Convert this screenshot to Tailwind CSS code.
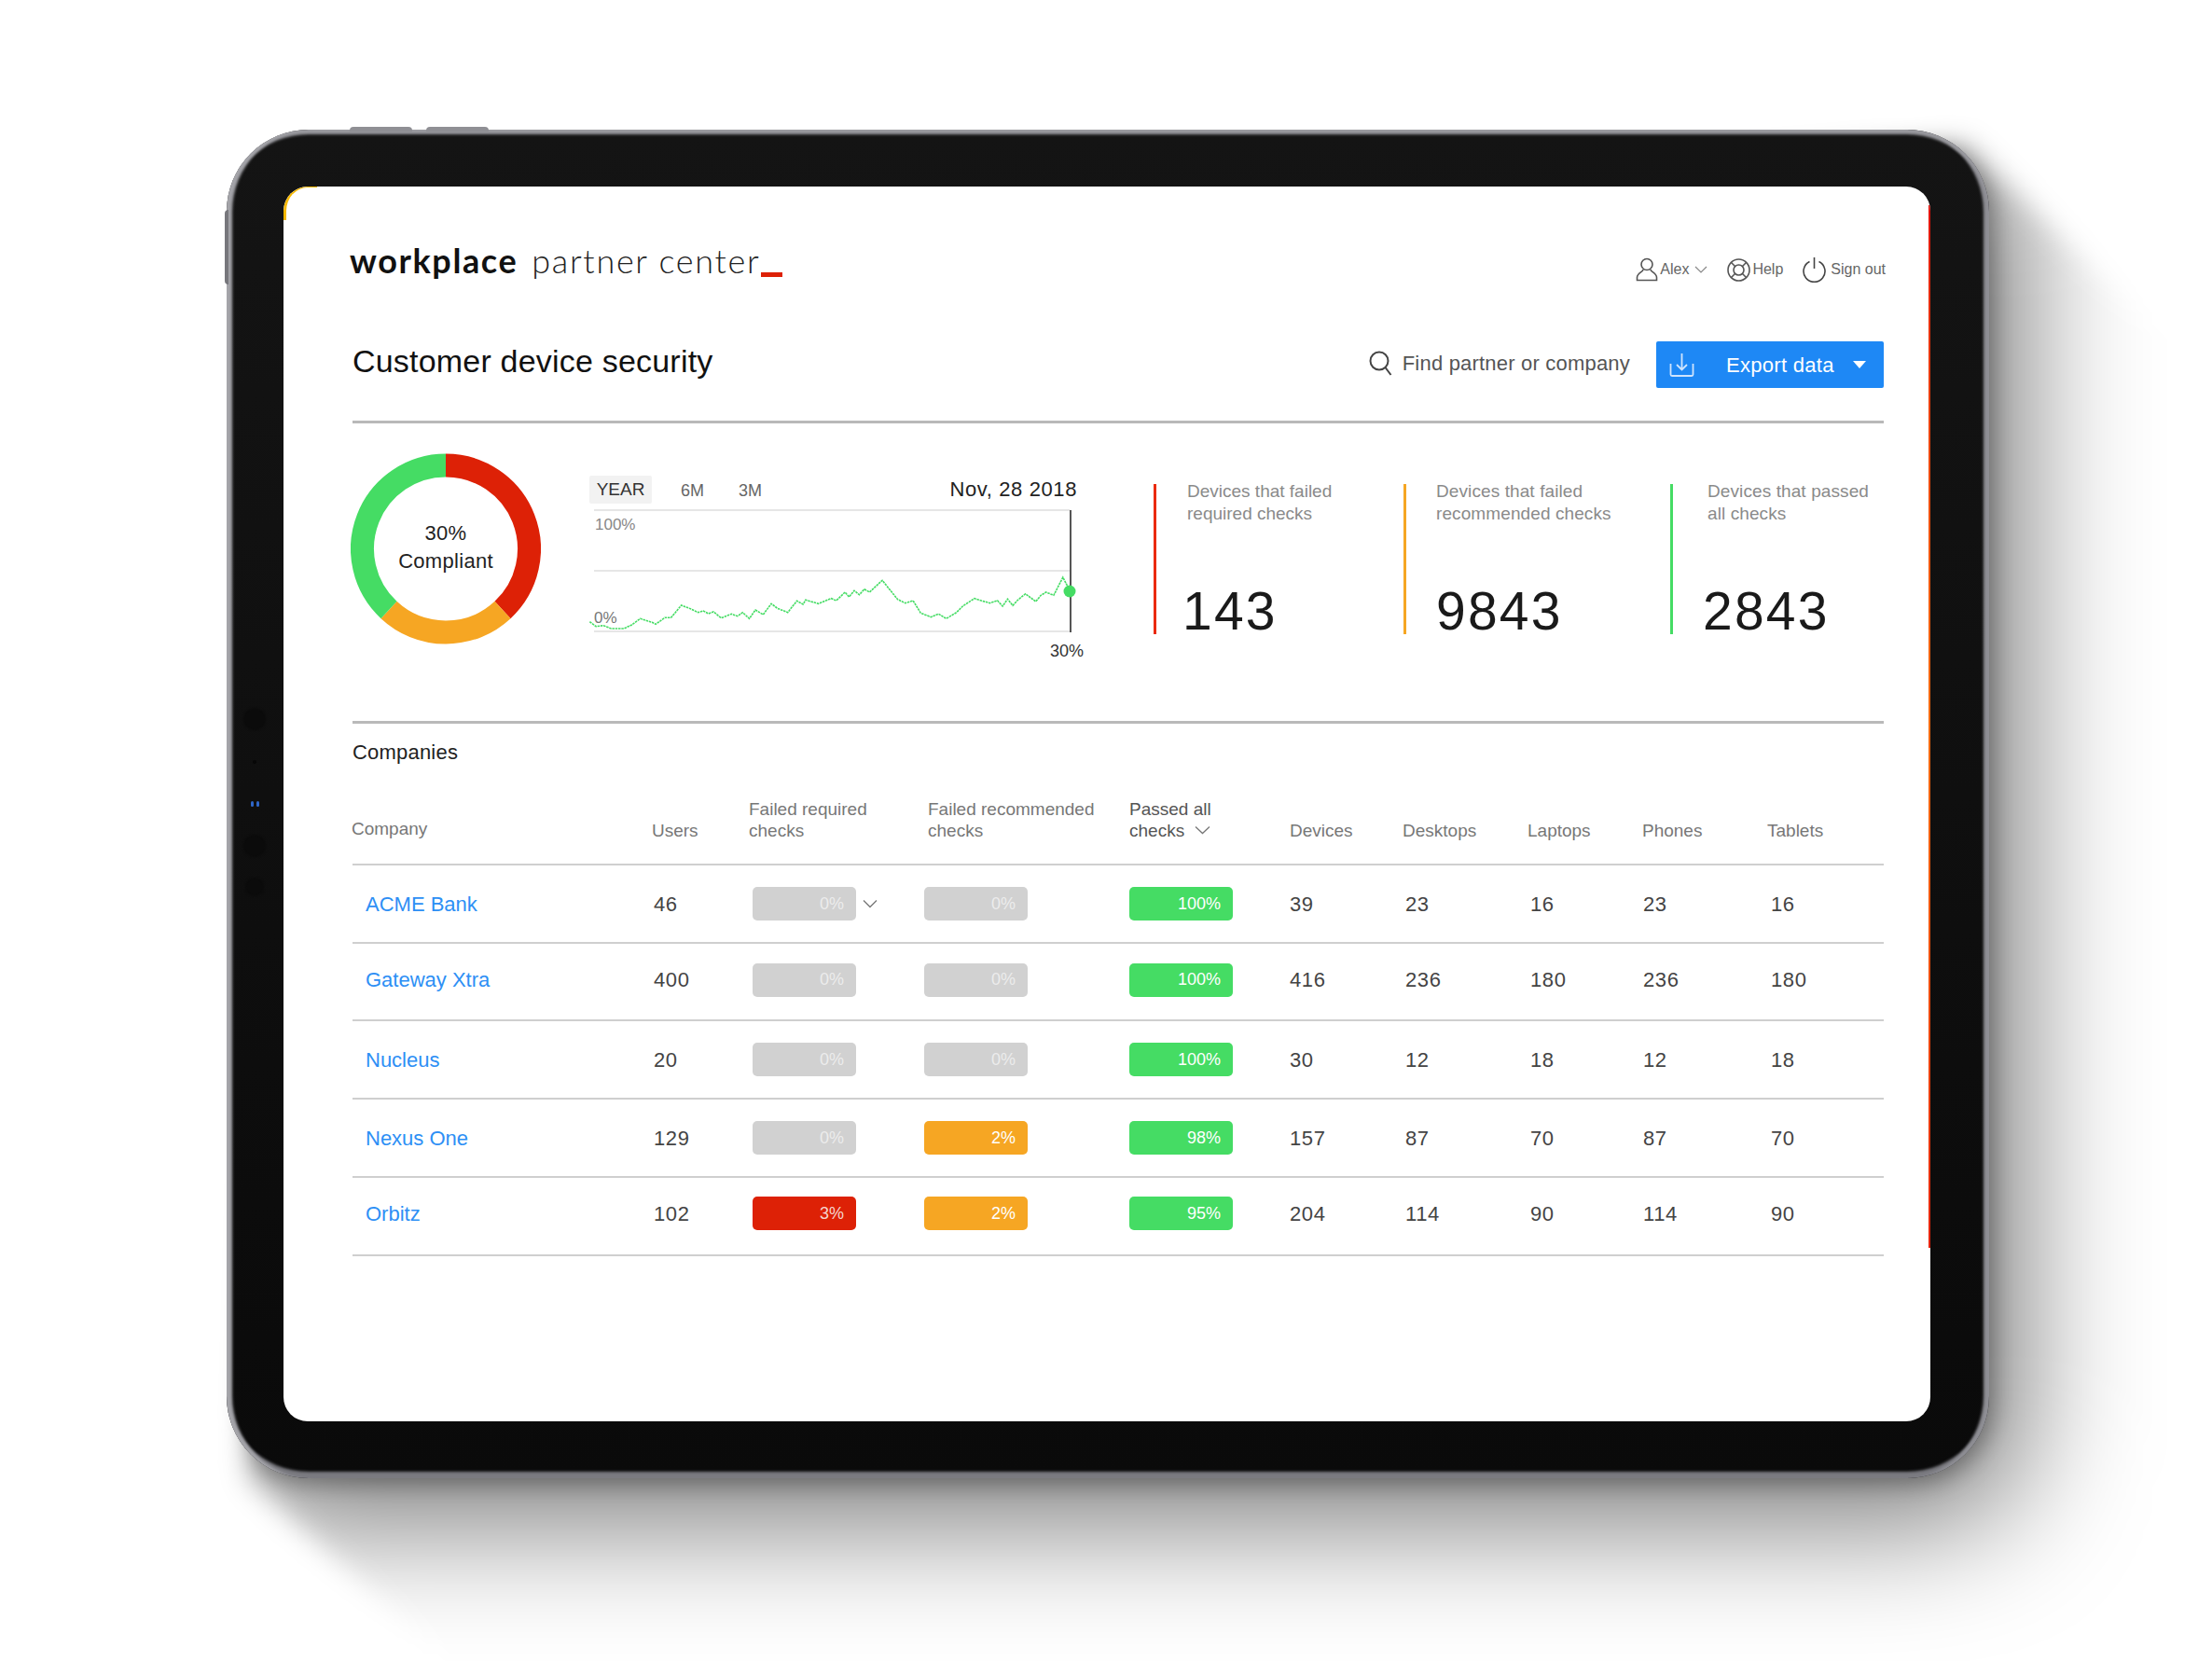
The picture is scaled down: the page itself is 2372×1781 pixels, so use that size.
<!DOCTYPE html>
<html lang="en">
<head>
    <meta charset="UTF-8">
    <title>Customer device security</title>
    <script src="https://cdn.jsdelivr.net/npm/@tailwindcss/browser@4"></script>
</head>
<body class="bg-white font-['Liberation_Sans',sans-serif] overflow-hidden">

<div class="relative w-[2372px] h-[1781px] pl-[243px] pt-[139px] overflow-hidden">
    <!-- cast shadow: only right and below the tablet, with slanted ends -->
    <svg class="absolute left-0 top-0" width="2372" height="1781" viewBox="0 0 2372 1781">
        <defs>
            <filter id="soft" x="-20%" y="-20%" width="140%" height="140%"><feGaussianBlur stdDeviation="68"/></filter>
            <filter id="contact" x="-5%" y="-5%" width="110%" height="110%"><feGaussianBlur stdDeviation="12"/></filter>
            <filter id="edge" x="-10%" y="-10%" width="120%" height="120%"><feGaussianBlur stdDeviation="14"/></filter>
            <mask id="cast" maskUnits="userSpaceOnUse" x="0" y="0" width="2372" height="1781">
                <polygon fill="white" filter="url(#edge)" points="2110,150 2600,640 2600,2000 720,2000 262,1587 300,300"/>
            </mask>
        </defs>
        <g mask="url(#cast)">
            <rect x="243" y="139" width="1925" height="1494" rx="90" fill="black" fill-opacity="0.52" filter="url(#soft)"/>
            <rect x="243" y="139" width="1895" height="1452" rx="88" fill="black" fill-opacity="0.32" filter="url(#contact)"/>
        </g>
    </svg>

    <!-- tablet -->
    <div class="relative w-[1890px] h-[1446px] pl-[61px] pt-[61px] pr-[63px] pb-[61px] rounded-[88px] bg-linear-to-b from-[#141414] to-[#0a0a0a] shadow-[inset_8px_0_3px_-2px_#a4a4a9,inset_0_7px_3px_-2px_#9a9a9f,inset_-8px_0_3px_-2px_#8e8e94,inset_0_-9px_3px_-2px_#7a7a80]">
        <span class="absolute left-[132px] -top-[3px] w-[67px] h-[5px] rounded-t-sm bg-[#8f8f94]"></span>
        <span class="absolute left-[214px] -top-[3px] w-[67px] h-[5px] rounded-t-sm bg-[#8f8f94]"></span>
        <span class="absolute -left-[2px] top-[86px] w-[4px] h-[80px] rounded-l-sm bg-[#77777c]"></span>
        <span class="absolute left-[18px] top-[620px] w-[24px] h-[24px] rounded-full bg-[#0b0b0b] blur-[1px]"></span>
        <span class="absolute left-[28px] top-[676px] w-[4px] h-[4px] rounded-full bg-[#070707]"></span>
        <span class="absolute left-[26px] top-[720px] w-[3px] h-[6px] rounded-full bg-[#2f66c8]"></span>
        <span class="absolute left-[32px] top-[720px] w-[3px] h-[6px] rounded-full bg-[#2f66c8]"></span>
        <span class="absolute left-[18px] top-[756px] w-[24px] h-[24px] rounded-full bg-[#0b0b0b] blur-[1px]"></span>
        <span class="absolute left-[20px] top-[802px] w-[20px] h-[20px] rounded-full bg-[#0b0b0b] blur-[1px]"></span>

        <!-- screen -->
        <div class="relative w-full h-full rounded-[26px] bg-white pl-[74px] pr-[50px] overflow-hidden">
            <span class="absolute left-0 top-0 w-[36px] h-[36px] rounded-tl-[26px] border-l-[3px] border-t-[1px] border-[#f6b800]"></span>
            <span class="absolute right-0 top-[20px] w-[2px] h-[1118px] bg-linear-to-b from-[#e0100a] via-[#f06a10] to-[#e3230b]"></span>

            <!-- logo + user links -->
            <div class="flex justify-between h-[140px] pt-[59px]">
                <div class="flex items-start -ml-[3px] h-[40px]">
                    <span class="font-['Lato',sans-serif] font-bold text-[36px] leading-[40px] text-[#111] tracking-[1.6px]">workplace</span>
                    <span class="ml-[15px] font-['Lato',sans-serif] font-light text-[36px] leading-[40px] text-[#222] tracking-[1.7px]">partner center</span>
                    <span class="ml-[1px] mt-[33px] w-[23px] h-[5px] bg-[#dd2106]"></span>
                </div>
                <div class="flex items-center h-[28px] mt-[16px] -mr-[2px] text-[16px] text-[#666]">
                    <svg class="w-[24px] h-[26px]" viewBox="0 0 24 26" fill="none" stroke="#555" stroke-width="1.6"><circle cx="12" cy="7.5" r="6"/><path d="M8 13c0 2.500-6.500 4-6.500 8.500v3h21v-3c0-4.500-6.500-6-6.500-8.500"/></svg>
                    <span class="ml-[2px]">Alex</span>
                    <svg class="ml-[6px] w-[14px] h-[10px]" viewBox="0 0 14 10" fill="none" stroke="#888" stroke-width="1.2"><path d="M1 2l6 6 6-6"/></svg>
                    <svg class="ml-[21px] w-[25px] h-[25px]" viewBox="0 0 25 25" fill="none" stroke="#555" stroke-width="1.6"><circle cx="12.500" cy="12.500" r="11.500"/><circle cx="12.500" cy="12.500" r="5.500"/><path d="M4.500 4.500l4 4M20.500 4.500l-4 4M4.500 20.500l4-4M20.500 20.500l-4-4"/></svg>
                    <span class="ml-[2px]">Help</span>
                    <svg class="ml-[21px] w-[25px] h-[27px]" viewBox="0 0 25 27" fill="none" stroke="#444" stroke-width="1.6"><path d="M7.500 4.500a11.500 11.500 0 1 0 10 0"/><path d="M12.500 0v12"/></svg>
                    <span class="ml-[5px]">Sign out</span>
                </div>
            </div>

            <!-- title row -->
            <div class="flex justify-between h-[114px] pt-[26px] border-b-[3px] border-[#b9b9b9]">
                <h1 class="text-[34px] leading-[40px] mt-[1px] text-[#111] font-normal tracking-[0.2px]">Customer device security</h1>
                <div class="flex items-start">
                    <div class="flex items-center h-[46px] text-[22px] text-[#555] tracking-[0.2px]">
                        <svg class="w-[25px] h-[27px]" viewBox="0 0 25 27" fill="none" stroke="#444" stroke-width="2"><circle cx="11" cy="11" r="9.500"/><path d="M17.500 18l6 8"/></svg>
                        <span class="ml-[11px]">Find partner or company</span>
                    </div>
                    <button class="ml-[28px] flex items-center w-[244px] h-[50px] pl-[14px] rounded-[2px] bg-[#1e88f5] text-white text-[22px]">
                        <svg class="w-[27px] h-[25px]" viewBox="0 0 27 25" fill="none" stroke="#cfe4fd" stroke-width="1.8"><path d="M1.500 11v11.500a1.500 1.500 0 0 0 1.500 1.500h21a1.500 1.500 0 0 0 1.500-1.500V11"/><path d="M13.500 0v17M8 12l5.500 5.500L19 12"/></svg>
                        <span class="ml-[34px] tracking-[0.3px]">Export data</span>
                        <span class="ml-[20px] w-0 h-0 border-x-[7px] border-x-transparent border-t-[8px] border-t-white"></span>
                    </button>
                </div>
            </div>

            <!-- summary -->
            <div class="flex h-[322px] border-b-[3px] border-[#b9b9b9]">
                <!-- donut -->
                <div class="relative -ml-[2px] mt-[32px] w-[204px] h-[205px] pb-[4px] flex flex-col items-center justify-center text-[22px] leading-[30px] text-[#222] tracking-[0.3px]">
                    <svg class="absolute inset-0" width="204" height="205" viewBox="0 0 204 205" fill="none" stroke-width="25">
                        <path stroke="#dd2106" d="M102 13A89.500 89.500 0 0 1 163 168"/>
                        <path stroke="#f6a623" d="M163 168A89.500 89.500 0 0 1 41 168"/>
                        <path stroke="#45dc64" d="M41 168A89.500 89.500 0 0 1 102 13"/>
                    </svg>
                    <span class="relative">30%</span>
                    <span class="relative">Compliant</span>
                </div>

                <!-- line chart -->
                <div class="relative ml-[52px] mt-[56px] w-[536px] h-[205px]">
                    <div class="flex items-center h-[30px] text-[18px] text-[#666]">
                        <span class="flex items-center justify-center w-[67px] h-[30px] rounded-[2px] bg-[#f2f2f2] text-[19px] text-[#333]">YEAR</span>
                        <span class="ml-[31px] mt-[2px]">6M</span>
                        <span class="ml-[37px] mt-[2px]">3M</span>
                        <span class="ml-auto mr-[13px] -mt-[1px] text-[22px] text-[#222] tracking-[0.6px]">Nov, 28 2018</span>
                    </div>
                    <svg class="absolute left-0 top-[30px]" width="536" height="140" viewBox="0 0 536 140" fill="none">
                        <path stroke="#e6e6e6" stroke-width="2" d="M5 7H515M5 72H515M5 137H515"/>
                        <path stroke="#555" stroke-width="2" d="M516 7V138"/>
                        <polyline id="trend" stroke="#45dc64" stroke-width="1.6" stroke-dasharray="2.500 0.800"/>
                        <circle cx="515" cy="94" r="6.500" fill="#45dc64"/>
                    </svg>
                    <span class="absolute left-[6px] top-[43px] text-[17px] leading-[20px] text-[#888]">100%</span>
                    <span class="absolute left-[5px] top-[143px] text-[17px] leading-[20px] text-[#777]">0%</span>
                    <span class="absolute left-[494px] top-[178px] text-[18px] leading-[20px] text-[#333]">30%</span>
                </div>

                <!-- counters -->
                <div class="flex ml-[69px] mt-[65px] h-[161px]">
                    <div class="w-[268px] h-full pl-[33px] border-l-[3px] border-[#ea2a0c]">
                        <p class="text-[19px] leading-[24px] text-[#8a8a8a] -mt-[4px]">Devices that failed<br>required checks</p>
                        <p class="mt-[59px] -ml-[5px] text-[57px] leading-[66px] tracking-[2.2px] text-[#1a1a1a]">143</p>
                    </div>
                    <div class="w-[286px] h-full pl-[32px] border-l-[3px] border-[#f6a623]">
                        <p class="text-[19px] leading-[24px] text-[#8a8a8a] -mt-[4px] tracking-[0.1px]">Devices that failed<br>recommended checks</p>
                        <p class="mt-[59px] text-[57px] leading-[66px] tracking-[2.2px] text-[#1a1a1a]">9843</p>
                    </div>
                    <div class="w-[228px] h-full pl-[37px] border-l-[3px] border-[#45dc64]">
                        <p class="text-[19px] leading-[24px] text-[#8a8a8a] -mt-[4px] tracking-[0.1px]">Devices that passed<br>all checks</p>
                        <p class="mt-[59px] -ml-[5px] text-[57px] leading-[66px] tracking-[2.2px] text-[#1a1a1a]">2843</p>
                    </div>
                </div>
            </div>

            <!-- companies -->
            <h2 class="pt-[18px] text-[22px] leading-[26px] text-[#222] font-normal tracking-[0.2px]">Companies</h2>
            <div class="grid grid-cols-[321px_104px_192px_216px_172px_121px_134px_123px_134px_125px] items-end h-[108px] pb-[24px] border-b-2 border-[#cfcfcf] text-[19px] leading-[23px] text-[#777]">
                <span class="-ml-[1px] mb-[2px]">Company</span>
                <span>Users</span>
                <span>Failed required<br>checks</span>
                <span>Failed recommended<br>checks</span>
                <span class="relative text-[#555]">Passed all<br>checks
                    <svg class="absolute left-[70px] top-[29px] w-[17px] h-[10px]" viewBox="0 0 17 10" fill="none" stroke="#777" stroke-width="1.300"><path d="M1 1.500l7.500 7 7.500-7"/></svg>
                </span>
                <span>Devices</span>
                <span>Desktops</span>
                <span>Laptops</span>
                <span>Phones</span>
                <span>Tablets</span>
            </div>
            <div id="rows"></div>
        </div>
    </div>
</div>

<script>
    const companies = [
        { name: "ACME Bank", users: 46, req: 0, rec: 0, pass: 100, devices: 39, desktops: 23, laptops: 16, phones: 23, tablets: 16, h: "h-[84px]", chevron: true },
        { name: "Gateway Xtra", users: 400, req: 0, rec: 0, pass: 100, devices: 416, desktops: 236, laptops: 180, phones: 236, tablets: 180, h: "h-[83px] pb-[4px]" },
        { name: "Nucleus", users: 20, req: 0, rec: 0, pass: 100, devices: 30, desktops: 12, laptops: 18, phones: 12, tablets: 18, h: "h-[84px]" },
        { name: "Nexus One", users: 129, req: 0, rec: 2, pass: 98, devices: 157, desktops: 87, laptops: 70, phones: 87, tablets: 70, h: "h-[84px]" },
        { name: "Orbitz", users: 102, req: 3, rec: 2, pass: 95, devices: 204, desktops: 114, laptops: 90, phones: 114, tablets: 90, h: "h-[84px] pb-[6px]" }
    ];

    function bar(value, color) {
        const bg = value === 0 ? "bg-[#d1d1d1] text-[#ececec]" : color;
        return `<span class="flex items-center justify-end w-[111px] h-[36px] pr-[13px] rounded-[5px] text-[18px] tracking-normal ${bg}">${value}%</span>`;
    }

    document.getElementById("rows").innerHTML = companies.map(c => `
        <div class="grid grid-cols-[321px_104px_192px_216px_172px_121px_134px_123px_134px_125px] items-center ${c.h} border-b-2 border-[#cfcfcf] text-[22px] text-[#444] tracking-[0.6px]">
            <a class="pl-[14px] text-[#2d8ff5] tracking-normal">${c.name}</a>
            <span class="pl-[2px]">${c.users}</span>
            <span class="flex items-center pl-[4px]">${bar(c.req, "bg-[#dd2106] text-[#f5d5cf]")}
                ${c.chevron ? `<svg class="ml-[7px] w-[16px] h-[10px]" viewBox="0 0 16 10" fill="none" stroke="#777" stroke-width="1.300"><path d="M1 1.500l7 7 7-7"/></svg>` : ""}
            </span>
            <span class="-ml-[4px]">${bar(c.rec, "bg-[#f6a623] text-white")}</span>
            <span>${bar(c.pass, "bg-[#45dc64] text-white")}</span>
            <span>${c.devices}</span>
            <span class="pl-[3px]">${c.desktops}</span>
            <span class="pl-[3px]">${c.laptops}</span>
            <span class="pl-[1px]">${c.phones}</span>
            <span class="pl-[4px]">${c.tablets}</span>
        </div>`).join("");

    // trend line traced from the chart, x/y in px of a stretched crop
    const trend = [[533,620],[545,635],[560,632],[575,642],[600,642],[615,630],[632,610],[655,622],[662,628],[680,607],[692,607],[712,567],[730,578],[745,590],[755,585],[765,594],[775,588],[790,608],[810,595],[822,602],[832,590],[845,610],[857,582],[872,597],[888,562],[900,577],[920,590],[938,553],[950,564],[955,550],[980,562],[1005,545],[1015,552],[1032,525],[1040,540],[1050,520],[1060,533],[1070,515],[1080,525],[1105,487],[1135,548],[1150,560],[1165,552],[1180,592],[1200,605],[1215,595],[1230,610],[1250,590],[1262,570],[1285,545],[1315,560],[1330,552],[1340,570],[1350,547],[1360,568],[1370,550],[1385,530],[1405,555],[1415,535],[1425,525],[1440,535],[1458,477],[1472,522]];
    const points = trend.map(([x, y]) => `${(x / 1.823 - 292).toFixed(1)},${(y / 3 - 80).toFixed(1)}`);
    document.getElementById("trend").setAttribute("points", points.join(" "));
</script>
</body>
</html>
